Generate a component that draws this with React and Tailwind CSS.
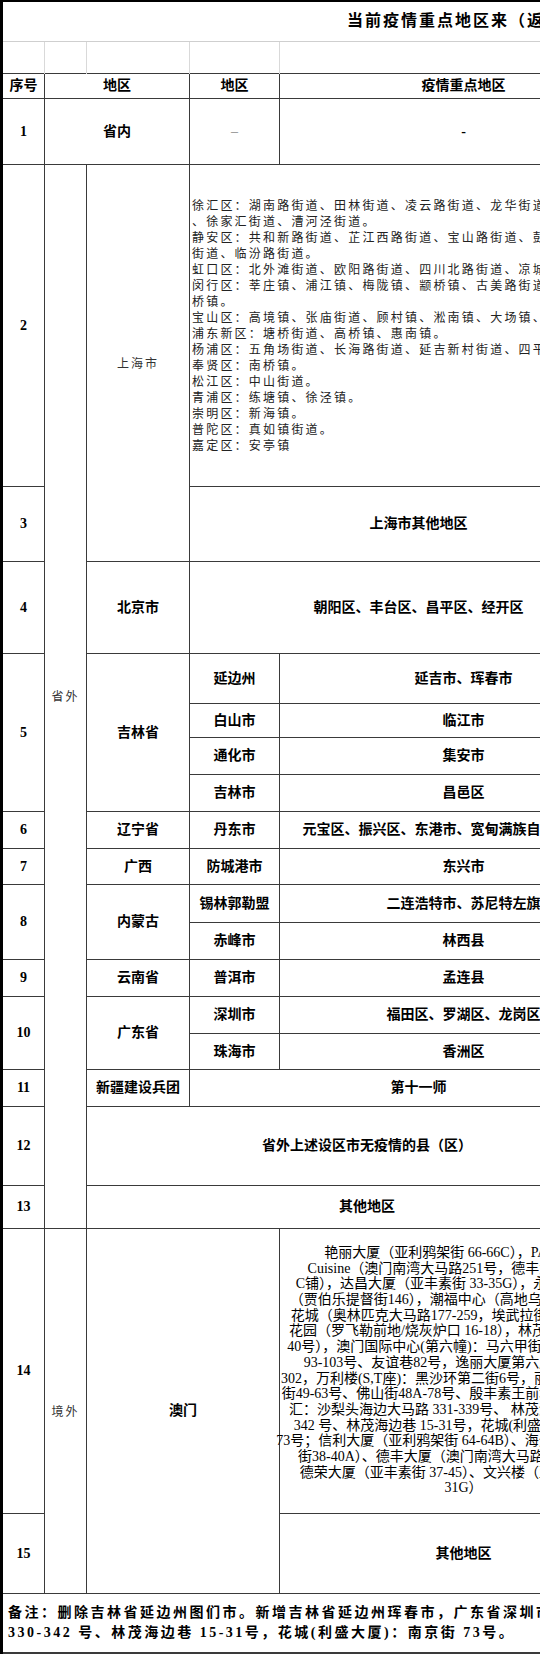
import React from 'react';

const bd = 'border border-[#3a3a3a]';
const num = `${bd} text-center text-[14px] font-bold`;
const txt = `${bd} text-center text-[14px] font-bold whitespace-nowrap`;
const soft = `${bd} text-center text-[12px] tracking-[2px] text-[#333] whitespace-nowrap font-['Noto_Sans_CJK_SC',sans-serif]`;

const shanghai = [
  '徐汇区：湖南路街道、田林街道、凌云路街道、龙华街道、康健新村街道、虹梅路街道',
  '、徐家汇街道、漕河泾街道。',
  '静安区：共和新路街道、芷江西路街道、宝山路街道、彭浦新村街道、大宁路',
  '街道、临汾路街道。',
  '虹口区：北外滩街道、欧阳路街道、四川北路街道、凉城新村街道。',
  '闵行区：莘庄镇、浦江镇、梅陇镇、颛桥镇、古美路街道、虹桥镇、马',
  '桥镇。',
  '宝山区：高境镇、张庙街道、顾村镇、淞南镇、大场镇、杨行镇。',
  '浦东新区：塘桥街道、高桥镇、惠南镇。',
  '杨浦区：五角场街道、长海路街道、延吉新村街道、四平路街道。',
  '奉贤区：南桥镇。',
  '松江区：中山街道。',
  '青浦区：练塘镇、徐泾镇。',
  '崇明区：新海镇。',
  '普陀区：真如镇街道。',
  '嘉定区：安亭镇',
];

const macau = [
  '艳丽大厦（亚利鸦架街 66-66C），PAN ASIAN',
  'Cuisine（澳门南湾大马路251号，德丰大厦地下A至',
  'C铺），达昌大厦（亚丰素街 33-35G），永宁广场第二座',
  '（贾伯乐提督街146），潮福中心（高地乌街57-71号），金',
  '花城（奥林匹克大马路177-259，埃武拉街1-55号），海湾',
  '花园（罗飞勒前地/烧灰炉口 16-18），林茂阁（林茂巷 38-',
  '40号），澳门国际中心(第六幢)：马六甲街83号、宋玉生路',
  '93-103号、友谊巷82号，逸丽大厦第六座（马场北大',
  '302，万利楼(S,T座)：黑沙环第二街6号，丽都花园：黑沙环',
  '街49-63号、佛山街48A-78号、殷丰素王前地 2-8号，新百老',
  '汇：沙梨头海边大马路 331-339号、 林茂海边大马路 330-',
  '342 号、林茂海边巷 15-31号，花城(利盛大厦)：南京街 ',
  '73号；信利大厦（亚利鸦架街 64-64B）、海景花园（亚利鸦架',
  '街38-40A）、德丰大厦（澳门南湾大马路 251-253号）、',
  '德荣大厦（亚丰素街 37-45）、文兴楼（亚丰素街 31A-',
  '31G）',
];

export default function App() {
  return (
    <div className="w-[540px] h-[1654px] overflow-hidden bg-white text-black font-['Liberation_Serif','Noto_Sans_CJK_SC',serif]">
      <table className="w-[646px] table-fixed border-collapse border-t-2 border-l-[3px] border-black">
        <colgroup>
          <col className="w-[43px]" />
          <col className="w-[42px]" />
          <col className="w-[103px]" />
          <col className="w-[90px]" />
          <col className="w-[368px]" />
        </colgroup>
        <tbody>
          <tr className="h-[40px]">
            <td colSpan={5} className="border-b border-[#cfcfcf] pl-[344px] text-left">
              <span className="whitespace-nowrap text-[16px] font-bold tracking-[2px]">
                当前疫情重点地区来（返）鲁人员管控措施
              </span>
            </td>
          </tr>
          <tr className="h-[32px]">
            <td className="border-x border-[#d9d9d9]" />
            <td className="border-x border-[#d9d9d9]" />
            <td className="border-x border-[#d9d9d9]" />
            <td className="border-x border-[#d9d9d9]" />
            <td className="border-x border-[#d9d9d9]" />
          </tr>
          <tr className="h-[25px]">
            <td className={num}>序号</td>
            <td colSpan={2} className={txt}>地区</td>
            <td className={txt}>地区</td>
            <td className={txt}>疫情重点地区</td>
          </tr>
          <tr className="h-[66px]">
            <td className={num}>1</td>
            <td colSpan={2} className={txt}>省内</td>
            <td className={`${bd} text-center text-[14px] text-[#8a8a8a]`}>–</td>
            <td className={txt}>-</td>
          </tr>
          <tr className="h-[322px]">
            <td className={num}>2</td>
            <td rowSpan={17} className={soft}>省外</td>
            <td rowSpan={2} className={soft}>上海市</td>
            <td colSpan={2} className={`${bd} pl-[2px] text-left`}>
              <div className="text-[12px] leading-[16px] tracking-[2.2px] text-[#222] font-['Noto_Sans_CJK_SC',sans-serif]">
                {shanghai.map((line, i) => (
                  <div key={i} className="whitespace-nowrap">{line}</div>
                ))}
              </div>
            </td>
          </tr>
          <tr className="h-[75px]">
            <td className={num}>3</td>
            <td colSpan={2} className={txt}>上海市其他地区</td>
          </tr>
          <tr className="h-[92px]">
            <td className={num}>4</td>
            <td className={txt}>北京市</td>
            <td colSpan={2} className={txt}>朝阳区、丰台区、昌平区、经开区</td>
          </tr>
          <tr className="h-[50px]">
            <td rowSpan={4} className={num}>5</td>
            <td rowSpan={4} className={txt}>吉林省</td>
            <td className={txt}>延边州</td>
            <td className={txt}>延吉市、珲春市</td>
          </tr>
          <tr className="h-[34px]">
            <td className={txt}>白山市</td>
            <td className={txt}>临江市</td>
          </tr>
          <tr className="h-[37px]">
            <td className={txt}>通化市</td>
            <td className={txt}>集安市</td>
          </tr>
          <tr className="h-[37px]">
            <td className={txt}>吉林市</td>
            <td className={txt}>昌邑区</td>
          </tr>
          <tr className="h-[37px]">
            <td className={num}>6</td>
            <td className={txt}>辽宁省</td>
            <td className={txt}>丹东市</td>
            <td className={txt}>元宝区、振兴区、东港市、宽甸满族自治县、凤城市</td>
          </tr>
          <tr className="h-[36px]">
            <td className={num}>7</td>
            <td className={txt}>广西</td>
            <td className={txt}>防城港市</td>
            <td className={txt}>东兴市</td>
          </tr>
          <tr className="h-[38px]">
            <td rowSpan={2} className={num}>8</td>
            <td rowSpan={2} className={txt}>内蒙古</td>
            <td className={txt}>锡林郭勒盟</td>
            <td className={txt}>二连浩特市、苏尼特左旗</td>
          </tr>
          <tr className="h-[37px]">
            <td className={txt}>赤峰市</td>
            <td className={txt}>林西县</td>
          </tr>
          <tr className="h-[37px]">
            <td className={num}>9</td>
            <td className={txt}>云南省</td>
            <td className={txt}>普洱市</td>
            <td className={txt}>孟连县</td>
          </tr>
          <tr className="h-[37px]">
            <td rowSpan={2} className={num}>10</td>
            <td rowSpan={2} className={txt}>广东省</td>
            <td className={txt}>深圳市</td>
            <td className={txt}>福田区、罗湖区、龙岗区</td>
          </tr>
          <tr className="h-[36px]">
            <td className={txt}>珠海市</td>
            <td className={txt}>香洲区</td>
          </tr>
          <tr className="h-[37px]">
            <td className={num}>11</td>
            <td className={txt}>新疆建设兵团</td>
            <td colSpan={2} className={txt}>第十一师</td>
          </tr>
          <tr className="h-[79px]">
            <td className={num}>12</td>
            <td colSpan={3} className={txt}>省外上述设区市无疫情的县（区）</td>
          </tr>
          <tr className="h-[43px]">
            <td className={num}>13</td>
            <td colSpan={3} className={txt}>其他地区</td>
          </tr>
          <tr className="h-[285px]">
            <td className={num}>14</td>
            <td rowSpan={2} className={`${soft} align-middle`}>
              <div className="flex h-[362px] items-center justify-center">境外</div>
            </td>
            <td rowSpan={2} colSpan={2} className={`${txt} align-middle`}>
              <div className="flex h-[362px] items-center justify-center">澳门</div>
            </td>
            <td className={bd}>
              <div className="flex flex-col items-center text-[14px] leading-[15.7px]">
                {macau.map((line, i) => (
                  <div key={i} className="whitespace-pre">{line}</div>
                ))}
              </div>
            </td>
          </tr>
          <tr className="h-[80px]">
            <td className={num}>15</td>
            <td className={txt}>其他地区</td>
          </tr>
          <tr className="h-[60px]">
            <td colSpan={5} className="border-t border-b-2 border-[#3a3a3a] px-[5px] text-left">
              <div className="text-[14px] font-bold leading-[20px] tracking-[2.5px]">
                <div className="whitespace-pre">备注：删除吉林省延边州图们市。新增吉林省延边州珲春市，广东省深圳市福田区、罗湖区、龙岗区，珠海市香洲区。澳门：林茂海边大马路</div>
                <div className="whitespace-pre">330-342 号、林茂海边巷 15-31号，花城(利盛大厦)：南京街 73号。</div>
              </div>
            </td>
          </tr>
        </tbody>
      </table>
    </div>
  );
}
